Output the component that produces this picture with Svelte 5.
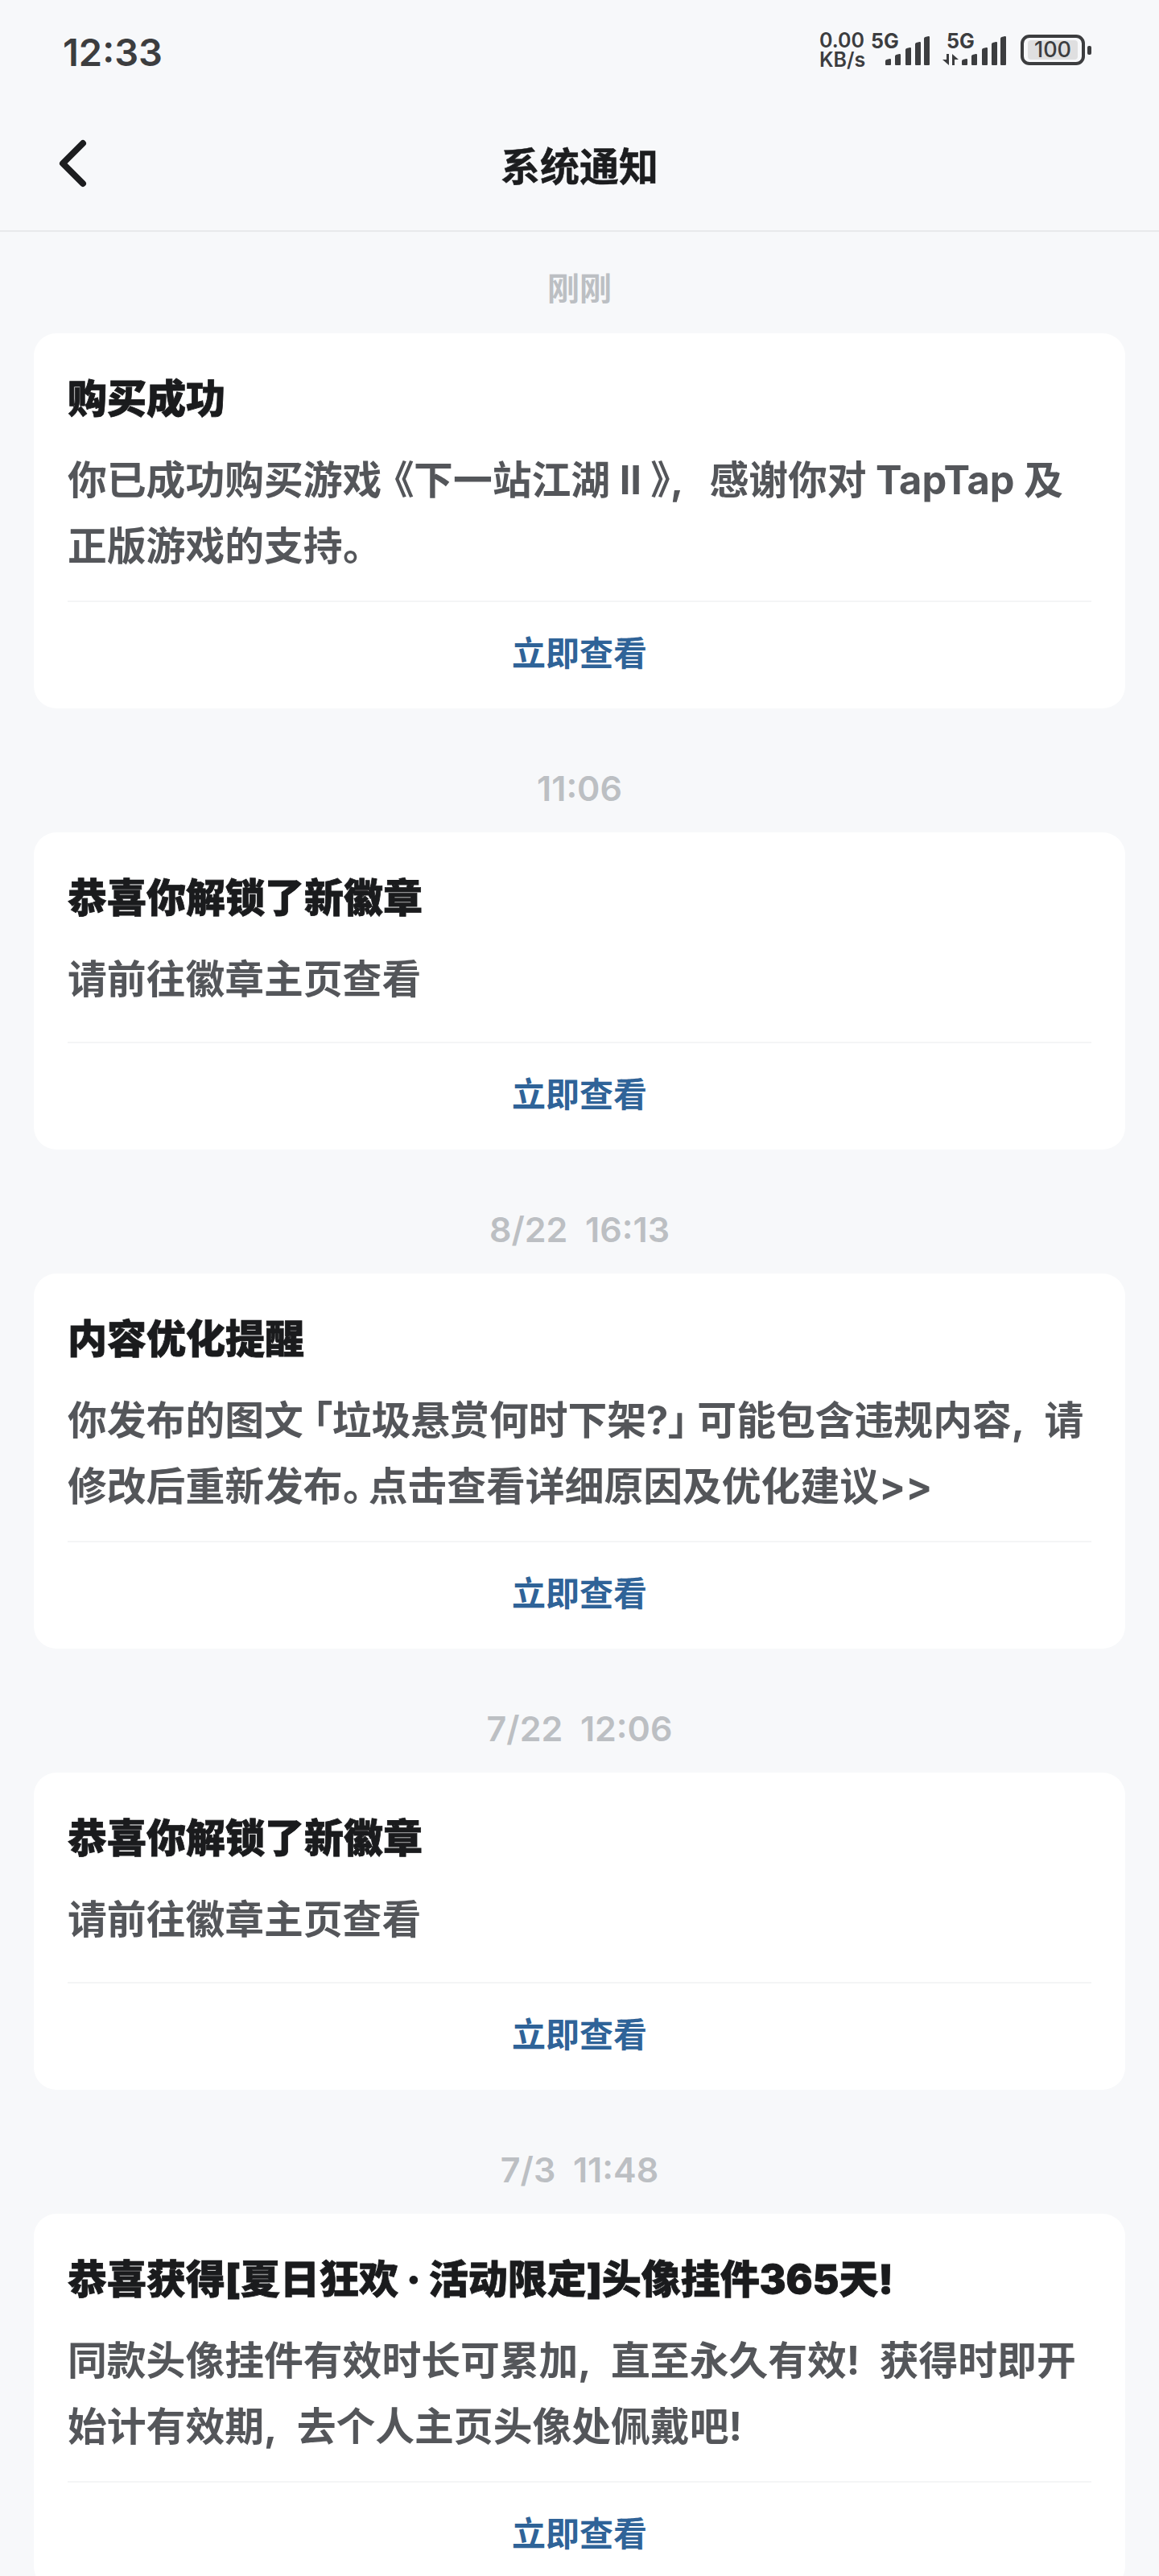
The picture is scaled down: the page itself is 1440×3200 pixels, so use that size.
<script>
  const notices = [
    {
      time: '刚刚',
      cjk: true,
      title: '购买成功',
      lines: ['你已成功购买游戏\u2009\u2009《下一站江湖 II 》,\u2002\u2009感谢你对 TapTap 及', '正版游戏的支持。'],
    },
    { time: '11:06', title: '恭喜你解锁了新徽章', lines: ['请前往徽章主页查看'] },
    {
      time: '8/22  16:13',
      title: '内容优化提醒',
      lines: ['你发布的图文 「垃圾悬赏何时下架?」 可能包含违规内容,\u2002请', '修改后重新发布。\u2009点击查看详细原因及优化建议>>'],
    },
    { time: '7/22  12:06', title: '恭喜你解锁了新徽章', lines: ['请前往徽章主页查看'] },
    {
      time: '7/3  11:48',
      title: '恭喜获得[夏日狂欢 · 活动限定]头像挂件365天!',
      lines: ['同款头像挂件有效时长可累加,\u2002直至永久有效!\u2002获得时即开', '始计有效期,\u2002去个人主页头像处佩戴吧!'],
    },
  ]

  // signal bars share a baseline at y=39, slanted tops
  function bar(x, h) {
    const t = 39 - h
    return `M${x} 38V${t + 3}q0-1.500 1.500-1.900l4-1.100q1.500-.3 1.500 1.300V38q0 1-1 1h-5q-1 0-1-1z`
  }
  const heights = [8, 14, 22, 29, 36]
  const signalA = [18, 30, 43, 55, 66].map((x, i) => bar(x, heights[i])).join('')
  const signalB = [24, 36, 49, 61, 72].map((x, i) => bar(x, heights[i])).join('')
</script>

<div class="page">
  <div class="status">
    <span class="clock">12:33</span>
    <div class="status-right">
      <div class="speed"><span>0.00</span><span>KB/s</span></div>
      <svg class="sig-a" width="73" height="52" viewBox="0 -12 73 52">
        <text x="0" y="18" class="g5">5G</text>
        <path d={signalA} fill="#3c3d3f" />
      </svg>
      <svg class="sig-b" width="79" height="52" viewBox="0 -12 79 52">
        <text x="5" y="18" class="g5">5G</text>
        <path d="M8 25v14L0 32h5v-7zM12 25l8 7h-5v7h-3z" fill="#3c3d3f" />
        <path d={signalB} fill="#3c3d3f" />
      </svg>
      <div class="battery">
        <div class="cell"><span>100</span></div>
        <i></i>
      </div>
    </div>
  </div>

  <header class="nav">
    <svg class="back" width="50" height="64" viewBox="0 0 50 64">
      <path d="M39 7 L14 32 L39 57" fill="none" stroke="#1c1d1f" stroke-width="8" stroke-linecap="round" stroke-linejoin="round" />
    </svg>
    <h1>系统通知</h1>
  </header>

  <main>
    {#each notices as n}
      <div class="time" class:cjk={n.cjk}>{n.time}</div>
      <section class="card">
        <h2>{n.title}</h2>
        <div class="body">
          {#each n.lines as line}
            <p>{line}</p>
          {/each}
        </div>
        <div class="action">立即查看</div>
      </section>
    {/each}
  </main>
</div>

<style>
  :global(body) {
    margin: 0;
    background: #f7f8fa;
  }

  .page {
    width: 1440px;
    height: 3200px;
    overflow: hidden;
    background: #f7f8fa;
    font-family: 'Inter', 'Noto Sans CJK SC', sans-serif;
  }

  /* status bar */
  .status {
    height: 128px;
    display: flex;
    align-items: center;
    justify-content: space-between;
    padding: 0 84px 0 78px;
    box-sizing: border-box;
  }

  .clock {
    font-size: 47px;
    font-weight: 600;
    color: #3c3d3f;
  }

  .status-right {
    display: flex;
    align-items: center;
  }

  .speed {
    display: flex;
    flex-direction: column;
    font-size: 25px;
    font-weight: 600;
    line-height: 24px;
    color: #3c3d3f;
    width: 64px;
    margin-top: -4px;
  }

  .sig-a,
  .sig-b {
    margin-top: -16px;
  }

  .sig-b {
    margin-left: 16px;
  }

  .g5 {
    font-size: 25px;
    font-weight: 700;
    fill: #3c3d3f;
  }

  .battery {
    display: flex;
    align-items: center;
    gap: 3px;
    margin-left: 18px;
    margin-top: -4px;
  }

  .cell {
    width: 80px;
    height: 38px;
    box-sizing: border-box;
    border: 4px solid #3c3d3f;
    border-radius: 11px;
    padding: 3px 5px;
    display: flex;
  }

  .cell span {
    flex: 1;
    background: #dfdfe0;
    border-radius: 4px;
    font-size: 27px;
    font-weight: 500;
    line-height: 24px;
    text-align: center;
    color: #3c3d3f;
  }

  .battery i {
    width: 5px;
    height: 11px;
    background: #3c3d3f;
    border-radius: 2px;
  }

  /* nav */
  .nav {
    height: 160px;
    display: flex;
    align-items: center;
    justify-content: center;
    position: relative;
    padding-bottom: 8px;
    border-bottom: 2px solid #e8e9eb;
    box-sizing: border-box;
  }

  .back {
    position: absolute;
    left: 64px;
    top: 43px;
  }

  h1 {
    margin: 0;
    font-size: 49px;
    font-weight: 700;
    color: #1c1d1f;
    -webkit-text-stroke: 0.5px #1c1d1f;
  }

  /* list */
  main {
    padding: 0 42px;
  }

  .time {
    height: 126px;
    box-sizing: border-box;
    padding-top: 39px;
    font-size: 43px;
    line-height: 64px;
    font-weight: 600;
    text-align: center;
    color: #bcbfc3;
    white-space: pre;
  }

  .time.cjk {
    font-size: 40px;
  }

  .card {
    background: #fff;
    border-radius: 28px;
    padding: 0 42px;
    margin-bottom: 28px;
  }

  h2 {
    margin: 0;
    padding-top: 46px;
    font-size: 49px;
    line-height: 72px;
    font-weight: 900;
    color: #1a1b1d;
    -webkit-text-stroke: 0.8px #1a1b1d;
  }

  /* one-line notices keep the same text block height floor */
  .body {
    box-sizing: border-box;
    min-height: 142px;
    padding: 24px 0 26px;
  }

  .body p {
    margin: 0;
    font-size: 48.8px;
    line-height: 82px;
    font-weight: 700;
    color: #54565a;
    white-space: nowrap;
    font-feature-settings: 'palt';
  }

  .action {
    border-top: 2px solid #f4f5f6;
    height: 132px;
    line-height: 128px;
    text-align: center;
    font-size: 42px;
    font-weight: 700;
    color: #2f6398;
  }
</style>
